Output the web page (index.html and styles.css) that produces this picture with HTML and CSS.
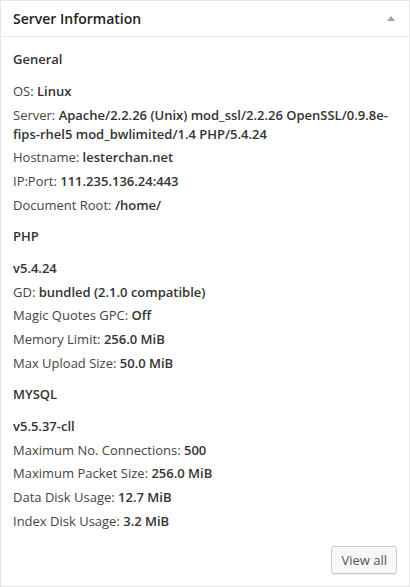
FILE: index.html
```html
<!DOCTYPE html>
<html>
<head>
<meta charset="utf-8">
<link rel="stylesheet" href="styles.css">
</head>
<body>
<div class="postbox">
  <div class="postbox-header">
    <h2 class="hndle">Server Information</h2>
    <span class="toggle-indicator"></span>
  </div>
  <div class="inside">
    <div class="section">
      <p class="sec-title">General</p>
      <p class="row">OS: <strong>Linux</strong></p>
      <p class="row">Server: <strong>Apache/2.2.26 (Unix) mod_ssl/2.2.26 OpenSSL/0.9.8e-fips-rhel5 mod_bwlimited/1.4 PHP/5.4.24</strong></p>
      <p class="row">Hostname: <strong>lesterchan.net</strong></p>
      <p class="row">IP:Port: <strong>111.235.136.24:443</strong></p>
      <p class="row">Document Root: <strong>/home/</strong></p>
    </div>
    <div class="section">
      <p class="sec-title">PHP</p>
      <p class="row"><strong>v5.4.24</strong></p>
      <p class="row">GD: <strong>bundled (2.1.0 compatible)</strong></p>
      <p class="row">Magic Quotes GPC: <strong>Off</strong></p>
      <p class="row">Memory Limit: <strong>256.0 MiB</strong></p>
      <p class="row">Max Upload Size: <strong>50.0 MiB</strong></p>
    </div>
    <div class="section">
      <p class="sec-title">MYSQL</p>
      <p class="row"><strong>v5.5.37-cll</strong></p>
      <p class="row">Maximum No. Connections: <strong>500</strong></p>
      <p class="row">Maximum Packet Size: <strong>256.0 MiB</strong></p>
      <p class="row">Data Disk Usage: <strong>12.7 MiB</strong></p>
      <p class="row">Index Disk Usage: <strong>3.2 MiB</strong></p>
    </div>
    <div class="actions">
      <a class="button" href="#">View all</a>
    </div>
  </div>
</div>
</body>
</html>
```

FILE: styles.css
```css
html, body {
  margin: 0;
  padding: 0;
  background: #fff;
}

body {
  font-family: "Open Sans", "Liberation Sans", sans-serif;
  font-size: 13px;
  color: #444;
  width: 410px;
  height: 587px;
}

.postbox {
  box-sizing: border-box;
  width: 410px;
  height: 587px;
  border: 1px solid #e5e5e5;
  background: #fff;
  display: flex;
  flex-direction: column;
}

.postbox-header {
  display: flex;
  align-items: center;
  justify-content: space-between;
  border-bottom: 1px solid #eee;
  padding: 8px 14px 8px 12px;
}

.hndle {
  margin: 0;
  font-size: 14px;
  font-weight: 600;
  line-height: 19px;
  color: #222;
}

.toggle-indicator {
  width: 0;
  height: 0;
  border-left: 4px solid transparent;
  border-right: 4px solid transparent;
  border-bottom: 5px solid #a0a0a0;
  margin-top: -1px;
}

.inside {
  flex: 1;
  display: flex;
  flex-direction: column;
  padding: 13px 12px 12px 12px;
}

.section {
  display: flex;
  flex-direction: column;
  gap: 4.8px;
  margin-bottom: 12px;
}

.section p {
  margin: 0;
  line-height: 19px;
}

.sec-title {
  font-weight: 600;
  color: #333;
  margin-bottom: 8px !important;
}

.row strong {
  font-weight: 600;
  color: #333;
}

.actions {
  display: flex;
  justify-content: flex-end;
  margin-top: auto;
}

.button {
  box-sizing: border-box;
  display: inline-block;
  height: 28px;
  line-height: 26px;
  padding: 0 9px 1px;
  font-size: 13px;
  color: #555;
  text-decoration: none;
  background: #f7f7f7;
  border: 1px solid #ccc;
  border-radius: 3px;
  box-shadow: inset 0 1px 0 #fff, 0 1px 0 rgba(0, 0, 0, 0.08);
}
```
